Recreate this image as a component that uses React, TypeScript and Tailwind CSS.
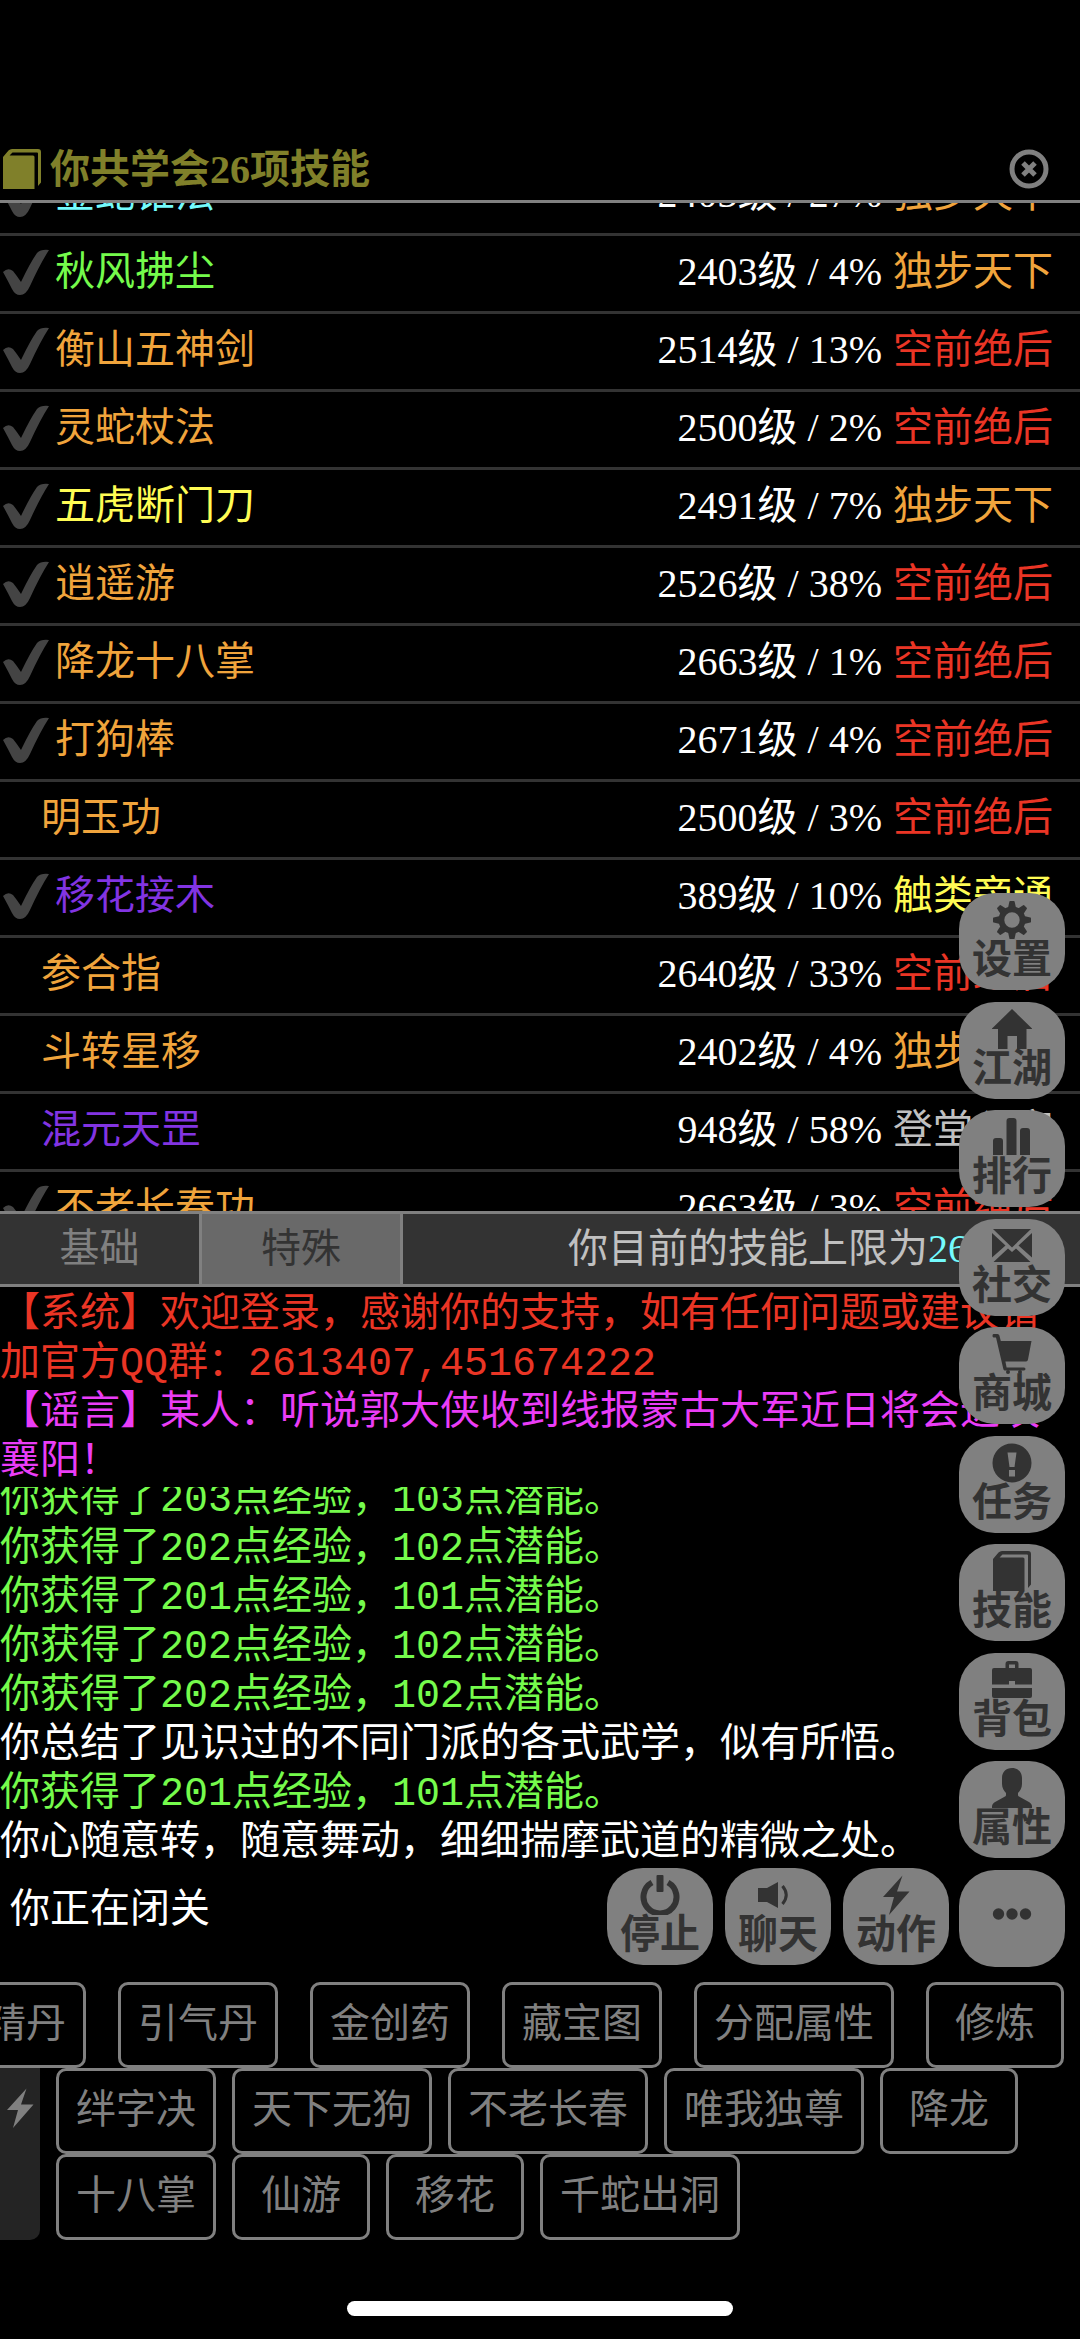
import type { ReactNode } from 'react'
import clsx from 'clsx'

type Skill = {
  name: string
  nameColor: string
  level: number
  percent: number
  rank: string
  rankColor: string
  active?: boolean
}

const ORANGE = 'text-[#f0a43c]'
const RED = 'text-[#ea3525]'
const YELLOW = 'text-[#fffc54]'
const PURPLE = 'text-[#8234e2]'
const GREEN = 'text-[#75fb4c]'
const CYAN = 'text-[#74fbfd]'
const SILVER = 'text-[#c0c0c0]'

const SKILLS: Skill[] = [
  { name: '金蛇锥法', nameColor: CYAN, level: 2403, percent: 27, rank: '独步天下', rankColor: ORANGE, active: true },
  { name: '秋风拂尘', nameColor: GREEN, level: 2403, percent: 4, rank: '独步天下', rankColor: ORANGE, active: true },
  { name: '衡山五神剑', nameColor: ORANGE, level: 2514, percent: 13, rank: '空前绝后', rankColor: RED, active: true },
  { name: '灵蛇杖法', nameColor: ORANGE, level: 2500, percent: 2, rank: '空前绝后', rankColor: RED, active: true },
  { name: '五虎断门刀', nameColor: YELLOW, level: 2491, percent: 7, rank: '独步天下', rankColor: ORANGE, active: true },
  { name: '逍遥游', nameColor: ORANGE, level: 2526, percent: 38, rank: '空前绝后', rankColor: RED, active: true },
  { name: '降龙十八掌', nameColor: ORANGE, level: 2663, percent: 1, rank: '空前绝后', rankColor: RED, active: true },
  { name: '打狗棒', nameColor: ORANGE, level: 2671, percent: 4, rank: '空前绝后', rankColor: RED, active: true },
  { name: '明玉功', nameColor: ORANGE, level: 2500, percent: 3, rank: '空前绝后', rankColor: RED },
  { name: '移花接木', nameColor: PURPLE, level: 389, percent: 10, rank: '触类旁通', rankColor: YELLOW, active: true },
  { name: '参合指', nameColor: ORANGE, level: 2640, percent: 33, rank: '空前绝后', rankColor: RED },
  { name: '斗转星移', nameColor: ORANGE, level: 2402, percent: 4, rank: '独步天下', rankColor: ORANGE },
  { name: '混元天罡', nameColor: PURPLE, level: 948, percent: 58, rank: '登堂入室', rankColor: SILVER },
  { name: '不老长春功', nameColor: ORANGE, level: 2663, percent: 3, rank: '空前绝后', rankColor: RED, active: true },
]

const LOG = [
  { text: '你获得了203点经验，103点潜能。', gain: true },
  { text: '你获得了202点经验，102点潜能。', gain: true },
  { text: '你获得了201点经验，101点潜能。', gain: true },
  { text: '你获得了202点经验，102点潜能。', gain: true },
  { text: '你获得了202点经验，102点潜能。', gain: true },
  { text: '你总结了见识过的不同门派的各式武学，似有所悟。' },
  { text: '你获得了201点经验，101点潜能。', gain: true },
  { text: '你心随意转，随意舞动，细细揣摩武道的精微之处。' },
]

const ITEMS = ['养精丹', '引气丹', '金创药', '藏宝图', '分配属性', '修炼']
const MOVES = [
  ['绊字决', '天下无狗', '不老长春', '唯我独尊', '降龙'],
  ['十八掌', '仙游', '移花', '千蛇出洞'],
]

function Icon({ children, className = 'size-10' }: { children: ReactNode; className?: string }) {
  return (
    <svg viewBox="0 0 40 40" fill="currentColor" className={clsx('shrink-0', className)} aria-hidden="true">
      {children}
    </svg>
  )
}

const gear = (
  <>
    <path
      fillRule="evenodd"
      d="M20 6.500a13.500 13.500 0 1 0 0 27a13.500 13.500 0 1 0 0-27ZM20 12.300a7.700 7.700 0 1 1 0 15.400a7.700 7.700 0 1 1 0-15.400Z"
    />
    {[0, 45, 90, 135, 180, 225, 270, 315].map((a) => (
      <path key={a} d="M16 8L17.400 1.600Q17.600 1 18.200 1H21.800Q22.400 1 22.600 1.600L24 8Z" transform={`rotate(${a} 20 20)`} />
    ))}
  </>
)
const home = <path d="M20 0L40.500 20H34.500V40H25V27H15.500V40H6V20H-.500Z" />
const bars = (
  <path d="M1 38V24q0-3 3-3h4q3 0 3 3V38ZM14.500 38V4q0-3 3-3h4q3 0 3 3V38ZM28 38V14q0-3 3-3h4q3 0 3 3V38Z" />
)
const mail = (
  <path d="M1 3H39L20 21.500ZM0 7L13.500 19.500L0 31.500ZM40 7L26.500 19.500L40 31.500ZM1.500 36L16 22.500L20 26L24 22.500L38.500 36Z" />
)
const cart = (
  <>
    <path d="M1.500 0H5.500Q7 0 7.400 1.500L8.800 7H39.500L36 25.500Q35.700 27.500 34 27.500H13.400L14.600 33.500H32Q33.500 33.700 33.500 35T32 36.500H13Q11.700 36.500 11.400 35.200L4 3.400H1.500Q.500 3.400 .500 1.700T1.500 0Z" />
    <circle cx="16" cy="38" r="2" />
    <circle cx="28" cy="38" r="2" />
  </>
)
const alert = (
  <path
    fillRule="evenodd"
    d="M20 .500a19.500 19.500 0 1 0 0 39a19.500 19.500 0 1 0 0-39ZM15.500 9.500H24.500L22.500 24H17.500ZM17 27H23V33.500H17Z"
  />
)
const book = (
  <path d="M1 8L6.500 1.500Q8 0 10 0H36Q39 0 39 3V33.500L36 37V4.500Q36 3.500 35 3.500H10.500L7.500 6.500H31Q32.500 6.500 32.500 8V40H1Z" />
)
const briefcase = (
  <path
    fillRule="evenodd"
    d="M13.500 8V4Q13.500 1 16.500 1H23.500Q26.500 1 26.500 4V8H38Q40 8 40 10V24.500H23V21H17V24.500H0V10Q0 8 2 8ZM17 8H23V4.500H17ZM0 28H40V36Q40 38 38 38H2Q0 38 0 36Z"
  />
)
const user = (
  <path d="M20 0C26 0 30 4 30 10V16C30 20 28 23 26 25V27Q26 28 27 28.600L36 33.500Q40 35.500 40 38.500V40H0V38.500Q0 35.500 4 33.500L13 28.600Q14 28 14 27V25C12 23 10 20 10 16V10C10 4 14 0 20 0Z" />
)
const power = (
  <>
    <path d="M12 7.500A16.500 16.500 0 1 0 28 7.500" fill="none" stroke="currentColor" strokeWidth="6" />
    <rect x="16.500" y="0" width="7" height="17" rx="1" />
  </>
)
const speaker = (
  <>
    <path d="M0 13H9L20 7V33L9 27H0Z" />
    <path d="M24.500 11Q32 20 24.500 29" fill="none" stroke="currentColor" strokeWidth="3" />
  </>
)
const bolt = <path d="M26.500 .500L7 22H18L13 40L33.500 16.500H21Z" />

const MENU = [
  { label: '设置', icon: gear },
  { label: '江湖', icon: home },
  { label: '排行', icon: bars },
  { label: '社交', icon: mail },
  { label: '商城', icon: cart },
  { label: '任务', icon: alert },
  { label: '技能', icon: book },
  { label: '背包', icon: briefcase },
  { label: '属性', icon: user },
]

function PadButton({ label, icon }: { label: string; icon: ReactNode }) {
  return (
    <button className="flex h-[97px] w-[106px] flex-col items-center rounded-[36px] bg-[#808080] pt-[7px] text-[#333333]">
      <Icon>{icon}</Icon>
      <span className="font-bold leading-[40px]">{label}</span>
    </button>
  )
}

function Chip({ children }: { children: ReactNode }) {
  return (
    <button className="h-[86px] min-w-[138px] shrink-0 rounded-[10px] border-[3px] border-[#808080] px-[17px] pb-[2px] text-[#808080]">
      {children}
    </button>
  )
}

export default function App() {
  return (
    <main
      lang="zh-CN"
      className="relative min-h-screen overflow-hidden bg-black font-['Liberation_Serif','Noto_Sans_CJK_SC',serif] text-[40px] text-white"
    >
      <header className="flex items-center border-b-[3px] border-[#808080] pt-[137px] pr-[31px] pl-[2px] text-[#80802a]">
        <Icon>{book}</Icon>
        <h1 className="ml-2 flex-1 pt-[3px] font-bold leading-[60px]">你共学会26项技能</h1>
        <button aria-label="关闭" className="text-[#808080]">
          <Icon>
            <circle cx="20" cy="20" r="17" fill="none" stroke="currentColor" strokeWidth="5" />
            <path d="M14 14L26 26M26 14L14 26" stroke="currentColor" strokeWidth="5" />
          </Icon>
        </button>
      </header>

      {/* Skill list, scrolled part of the way down */}
      <section className="h-[1008px] overflow-hidden">
        <ul className="-mt-[45px]">
          {SKILLS.map((s) => (
            <li
              key={s.name}
              className="flex h-[78px] items-center gap-[11px] border-b-[3px] border-[#333333] pr-[27px] pb-1 whitespace-nowrap"
            >
              {s.active ? (
                <svg viewBox="0 0 46 46" className="-mr-[5px] ml-[3px] size-[46px] text-[#444444]" aria-hidden="true">
                  <path
                    d="M0 23Q5 18 10 22Q14 27 18 33Q27 14 34 4Q38 0 46 1Q37 15 27 37Q23 46 17 46Q12 46 9 40Q5 32 0 23Z"
                    fill="currentColor"
                  />
                </svg>
              ) : (
                <span className="w-[30px]" />
              )}
              <span className={clsx('flex-1', s.nameColor)}>{s.name}</span>
              <span>
                {s.level}级 / {s.percent}%
              </span>
              <span className={s.rankColor}>{s.rank}</span>
            </li>
          ))}
        </ul>
      </section>

      <nav className="flex h-[76px] border-y-[3px] border-[#808080] bg-[#333333] leading-[70px]">
        <button className="w-[202px] border-r-[3px] border-[#808080] text-[#808080]">基础</button>
        <button className="w-[201px] border-r-[3px] border-[#808080] bg-[#696969] text-[#333333]">特殊</button>
        <p className="flex-1 pr-[72px] text-right text-[#c0c0c0]">
          你目前的技能上限为<span className={CYAN}>2671</span>
        </p>
      </nav>

      <section className="h-[200px] pt-1 pr-4 font-['Liberation_Mono','Noto_Sans_CJK_SC',monospace] leading-[49px]">
        <p className={RED}>【系统】欢迎登录，感谢你的支持，如有任何问题或建议请加官方QQ群：2613407,451674222</p>
        <p className="text-[#ea3df7]">【谣言】某人：听说郭大侠收到线报蒙古大军近日将会进攻襄阳！</p>
      </section>

      {/* Newest line stays at the bottom, older ones slide out above */}
      <section className="flex h-[381px] flex-col justify-end overflow-hidden font-['Liberation_Mono','Noto_Sans_CJK_SC',monospace] leading-[49px]">
        {LOG.map((line, i) => (
          <p key={i} className={clsx('shrink-0', line.gain && GREEN)}>
            {line.text}
          </p>
        ))}
      </section>

      <section className="flex h-[114px] items-start gap-3 pr-[131px] pl-[10px]">
        <p className="flex-1 leading-[82px]">你正在闭关</p>
        <PadButton label="停止" icon={power} />
        <PadButton label="聊天" icon={speaker} />
        <PadButton label="动作" icon={bolt} />
      </section>

      <section className="flex justify-end gap-8 overflow-hidden pr-4">
        {ITEMS.map((item) => (
          <Chip key={item}>{item}</Chip>
        ))}
      </section>

      <section className="flex gap-4">
        <button
          aria-label="快捷动作"
          className="flex w-10 shrink-0 justify-center rounded-br-[10px] bg-[#242424] pt-5 text-[#808080]"
        >
          <Icon>{bolt}</Icon>
        </button>
        <div>
          {MOVES.map((row, i) => (
            <div key={i} className="flex gap-4">
              {row.map((move) => (
                <Chip key={move}>{move}</Chip>
              ))}
            </div>
          ))}
        </div>
      </section>

      <div className="mx-auto mt-[61px] mb-[23px] h-[15px] w-[386px] rounded-full bg-white" />

      {/* Floating menu over the panels */}
      <aside className="absolute top-[893px] right-[15px] flex h-[1074px] flex-col justify-between">
        {MENU.map((m) => (
          <PadButton key={m.label} label={m.label} icon={m.icon} />
        ))}
        <button
          aria-label="更多"
          className="flex h-[97px] w-[106px] items-center justify-center rounded-[36px] bg-[#808080] pb-2 text-[#333333]"
        >
          <Icon>
            <circle cx="6.500" cy="20" r="5.700" />
            <circle cx="20" cy="20" r="5.700" />
            <circle cx="33.500" cy="20" r="5.700" />
          </Icon>
        </button>
      </aside>
    </main>
  )
}
